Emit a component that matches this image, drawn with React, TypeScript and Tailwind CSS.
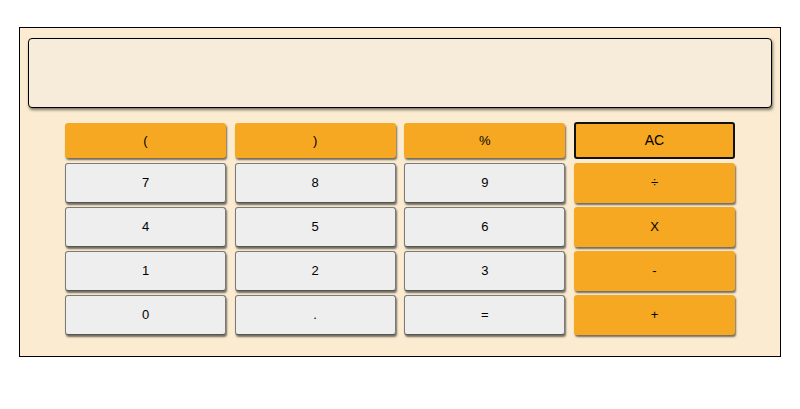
import React from "react";

type B = { label: string; kind: "op" | "num" | "ac"; h: number };

const rows: B[][] = [
  [
    { label: "(", kind: "op", h: 35 },
    { label: ")", kind: "op", h: 35 },
    { label: "%", kind: "op", h: 35 },
    { label: "AC", kind: "ac", h: 35 },
  ],
  [
    { label: "7", kind: "num", h: 40 },
    { label: "8", kind: "num", h: 40 },
    { label: "9", kind: "num", h: 40 },
    { label: "÷", kind: "op", h: 40 },
  ],
  [
    { label: "4", kind: "num", h: 40 },
    { label: "5", kind: "num", h: 40 },
    { label: "6", kind: "num", h: 40 },
    { label: "X", kind: "op", h: 40 },
  ],
  [
    { label: "1", kind: "num", h: 40 },
    { label: "2", kind: "num", h: 40 },
    { label: "3", kind: "num", h: 40 },
    { label: "-", kind: "op", h: 40 },
  ],
  [
    { label: "0", kind: "num", h: 40 },
    { label: ".", kind: "num", h: 40 },
    { label: "=", kind: "num", h: 40 },
    { label: "+", kind: "op", h: 40 },
  ],
];

function Btn({ b }: { b: B }) {
  const base =
    "flex items-center justify-center text-[13px] text-black rounded-[3px] shadow-[1px_2px_2px_rgba(0,0,0,0.55)]";
  if (b.kind === "num")
    return (
      <div className={`${base} h-[40px] bg-[#eeeeee] border border-[#7a7a7a] border-b-[#555]`}>{b.label}</div>
    );
  if (b.kind === "ac")
    return (
      <div className={`${base} h-[37px] -mt-[1px] bg-[#f6a823] border-2 border-[#111] text-[14px] shadow-none`}>
        {b.label}
      </div>
    );
  return (
    <div className={`${base} ${b.h === 35 ? "h-[35px]" : "h-[40px]"} bg-[#f6a823]`}>{b.label}</div>
  );
}

export default function App() {
  return (
    <div className="w-[800px] h-[409px] bg-white pt-[27px] pl-[19px]" style={{ fontFamily: '"Liberation Sans", Arial, sans-serif' }}>
      <div className="w-[762px] h-[330px] border border-black bg-[#fbebd0] pt-[10px] px-[8px]">
        <div className="h-[70px] border border-black rounded-[4px] bg-[#f7ecd9] shadow-[1px_2px_3px_rgba(0,0,0,0.5)]"></div>
        <div className="w-[670px] mx-auto mt-[15px] flex flex-col gap-y-[4px]">
          {rows.map((r, i) => (
            <div key={i} className="grid grid-cols-4 gap-x-[8.67px]">
              {r.map((b, j) => (
                <Btn key={j} b={b} />
              ))}
            </div>
          ))}
        </div>
      </div>
    </div>
  );
}
